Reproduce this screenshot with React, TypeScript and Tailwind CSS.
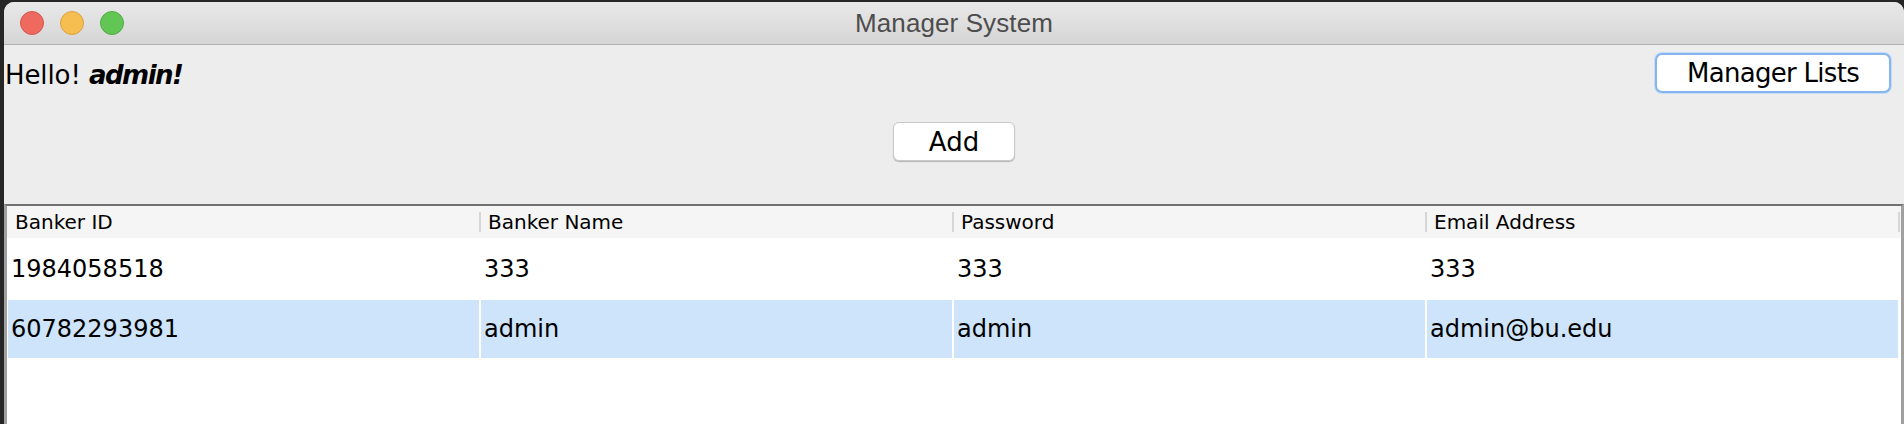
import React from "react";

const cols = ["Banker ID", "Banker Name", "Password", "Email Address"];
const rows = [
  { cells: ["1984058518", "333", "333", "333"], selected: false },
  { cells: ["60782293981", "admin", "admin", "admin@bu.edu"], selected: true },
];

export default function App() {
  return (
    <div className="h-[424px] w-[1904px] overflow-hidden bg-[#262626] pl-[4px] pt-[2px] flex font-['DejaVu_Sans','Verdana',sans-serif] text-black">
      <div className="flex-1 flex flex-col rounded-t-[10px] overflow-hidden bg-[#ededed]">
        {/* Title bar */}
        <div className="h-[43px] shrink-0 grid grid-cols-[1fr_auto_1fr] items-center border-b border-[#b3b3b3] bg-gradient-to-b from-[#e9e9e9] to-[#d5d5d5]">
          <div className="flex items-center gap-[16px] pl-[16px]">
            <div className="w-[24px] h-[24px] rounded-full bg-[#ee6a5f] border border-[#d5584d]" />
            <div className="w-[24px] h-[24px] rounded-full bg-[#f6be50] border border-[#d9a240]" />
            <div className="w-[24px] h-[24px] rounded-full bg-[#62c655] border border-[#52a844]" />
          </div>
          <div className="font-['Liberation_Sans',Arial,sans-serif] text-[26px] leading-[30px] text-[#4d4d4d] tracking-[0.1px]">
            Manager System
          </div>
          <div />
        </div>

        {/* Body */}
        <div className="pt-[8px] flex flex-col">
          <div className="flex justify-between items-start pr-[13px]">
            <div className="mt-[7px] pl-[1px] text-[26px] leading-[30px] tracking-[-0.1px]">
              Hello! <span className="font-bold italic tracking-[-1.5px]">admin!</span>
            </div>
            <button className="w-[236px] h-[40px] rounded-[7px] bg-white border-2 border-[#86b5ee] shadow-[0_0_0_1px_#c4dcf7] flex items-center justify-center text-[26px] leading-[30px] tracking-[-0.7px]">
              Manager Lists
            </button>
          </div>
          <div className="flex justify-center mt-[29px] pr-[0px]">
            <button className="w-[122px] h-[39px] rounded-[6px] bg-white border border-[#c9c9c9] shadow-[0_1px_1px_#b5b5b5] flex items-center justify-center text-[26px] leading-[30px]">
              Add
            </button>
          </div>
        </div>

        {/* Table */}
        <div className="mt-[43px] flex-1 bg-white border-t-2 border-t-[#717171] border-l-[3px] border-r-[3px] border-x-[#a0a0a0]">
          <div className="flex h-[32px] items-center bg-[#f5f5f5] pl-[1px]">
            <div className="grid grid-cols-4 gap-x-[2px] flex-1 h-full">
              {cols.map((c, i) => (
                <div key={c} className="flex items-center h-full">
                  {i > 0 && <div className="w-[2px] h-[20px] -ml-[2px] bg-[#d6d6d6]" />}
                  <span className="pl-[7px] text-[20px] leading-[24px]">{c}</span>
                </div>
              ))}
            </div>
            <div className="w-[2px] h-[20px] bg-[#d6d6d6] mr-[1px]" />
          </div>
          <div className="flex flex-col gap-[2px] pt-[2px] pl-[1px] pr-[3px]">
            {rows.map((r, ri) => (
              <div key={ri} className="grid grid-cols-4 gap-x-[2px] h-[58px]">
                {r.cells.map((c, ci) => (
                  <div
                    key={ci}
                    className={
                      r.selected
                        ? "flex items-center pl-[3px] bg-[#cde4fb] text-[24px] leading-[28px]"
                        : "flex items-center pl-[3px] bg-white text-[24px] leading-[28px]"
                    }
                  >
                    {c}
                  </div>
                ))}
              </div>
            ))}
          </div>
        </div>
      </div>
    </div>
  );
}
